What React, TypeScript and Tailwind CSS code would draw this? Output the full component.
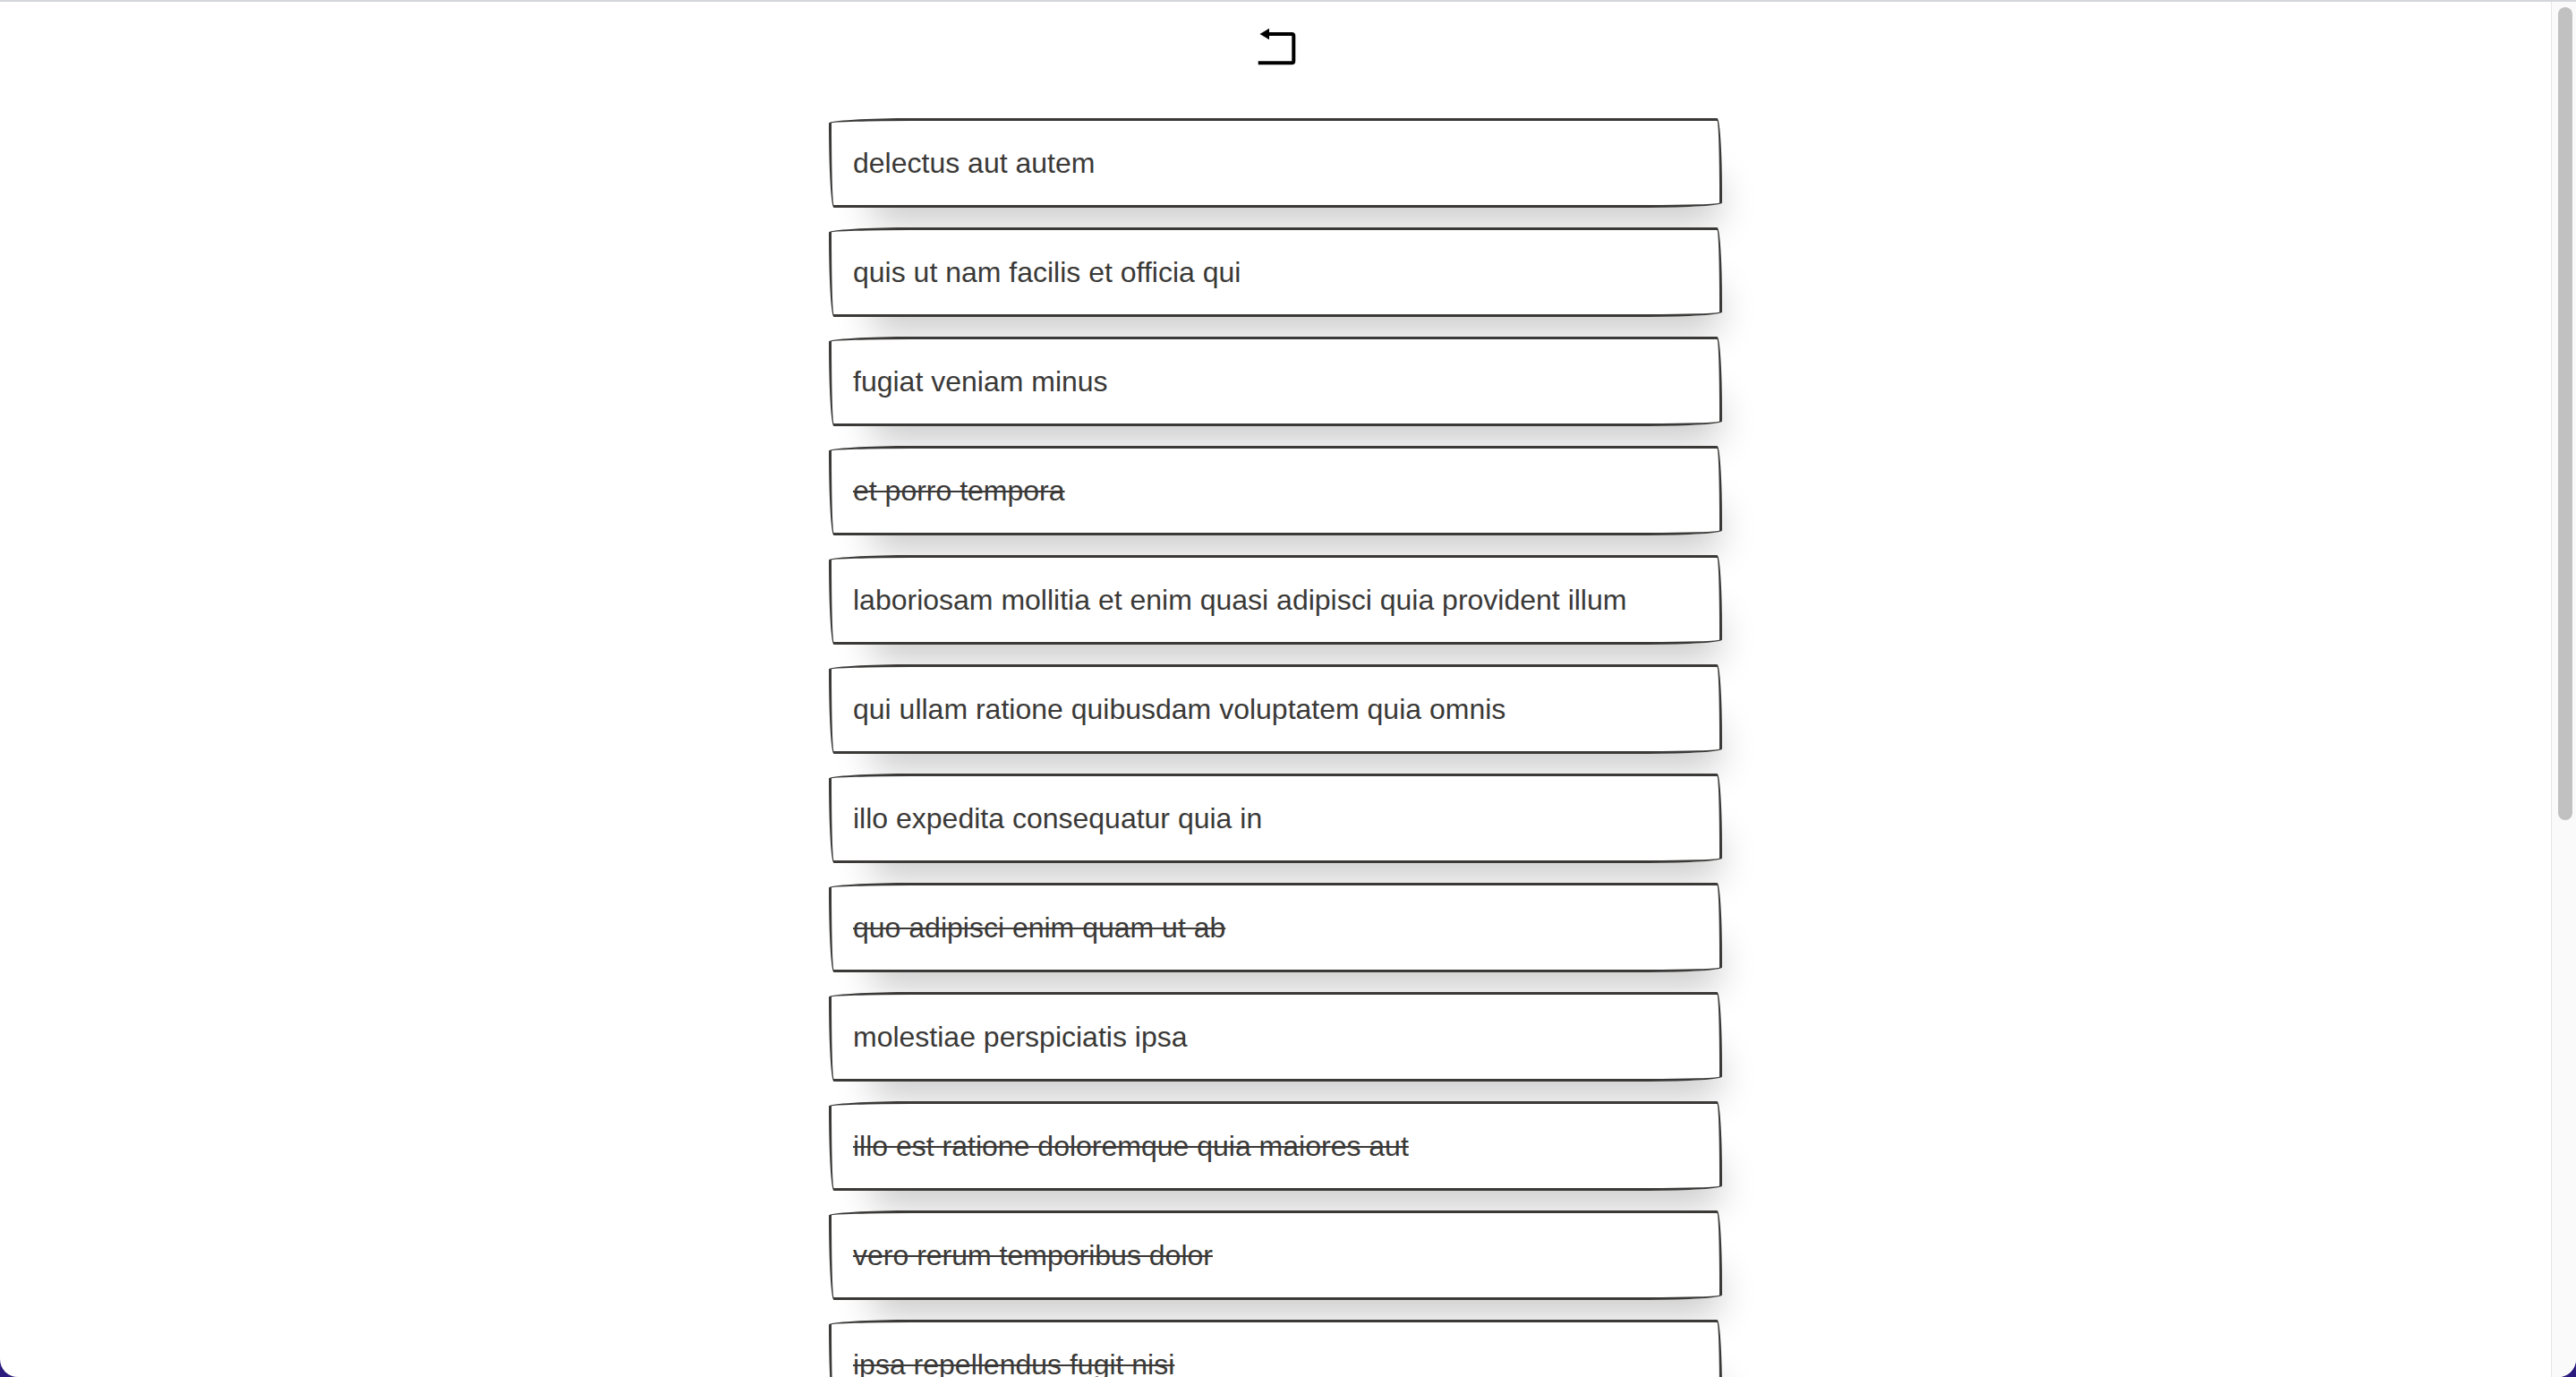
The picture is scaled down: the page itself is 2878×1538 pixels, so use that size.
import React from 'react';

const todos = [
  { title: 'delectus aut autem', done: false },
  { title: 'quis ut nam facilis et officia qui', done: false },
  { title: 'fugiat veniam minus', done: false },
  { title: 'et porro tempora', done: true },
  { title: 'laboriosam mollitia et enim quasi adipisci quia provident illum', done: false },
  { title: 'qui ullam ratione quibusdam voluptatem quia omnis', done: false },
  { title: 'illo expedita consequatur quia in', done: false },
  { title: 'quo adipisci enim quam ut ab', done: true },
  { title: 'molestiae perspiciatis ipsa', done: false },
  { title: 'illo est ratione doloremque quia maiores aut', done: true },
  { title: 'vero rerum temporibus dolor', done: true },
  { title: 'ipsa repellendus fugit nisi', done: true },
  { title: 'et doloremque nulla', done: false },
  { title: 'repellendus sunt dolores architecto voluptatum', done: true },
  { title: 'ab voluptatum amet voluptas', done: true },
];

const BackIcon = () => (
  <svg width="48" height="48" viewBox="0 0 48 48" fill="none">
    <path
      d="M16 10 H42.3 a2 2 0 0 1 2 2 V40.3 a2 2 0 0 1 -2 2 H4.7"
      stroke="#000"
      strokeWidth="4"
      strokeLinejoin="round"
    />
    <path d="M6.5 10 L17 3.8 L17 16.2 Z" fill="#000" />
  </svg>
);

const App = () => {
  return (
    <div className="h-screen w-full bg-[#2b1b7d] overflow-hidden">
      <div className="h-full w-full bg-white rounded-b-[20px] border-t-2 border-[#d4d6da] flex overflow-hidden">
        <main className="flex-1 flex flex-col items-center pt-[26px] overflow-hidden font-['Liberation_Sans',Arial,sans-serif]">
          <button className="w-[48px] h-[48px]">
            <BackIcon />
          </button>
          <ul className="mt-[56px] flex flex-col gap-[22px] w-[998px]">
            {todos.map((t, i) => (
              <li
                key={i}
                className="h-[100px] shrink-0 flex items-center pl-[24px] bg-white border-[3px] border-[#3a3937] [border-radius:255px_15px_225px_15px/15px_225px_15px_255px] shadow-[22px_42px_40px_-26px_rgba(0,0,0,0.22)]"
              >
                <span
                  className={
                    'text-[32px] leading-none text-[#3a3937] ' +
                    (t.done ? 'line-through decoration-[2px]' : '')
                  }
                >
                  {t.title}
                </span>
              </li>
            ))}
          </ul>
        </main>
        <div className="w-[28px] h-full border-l border-[#e6e6e6] bg-[#fafafa] pt-[6px] pl-[7px]">
          <div className="w-[16px] h-[908px] rounded-full bg-[#c1c1c1]" />
        </div>
      </div>
    </div>
  );
};

export default App;
